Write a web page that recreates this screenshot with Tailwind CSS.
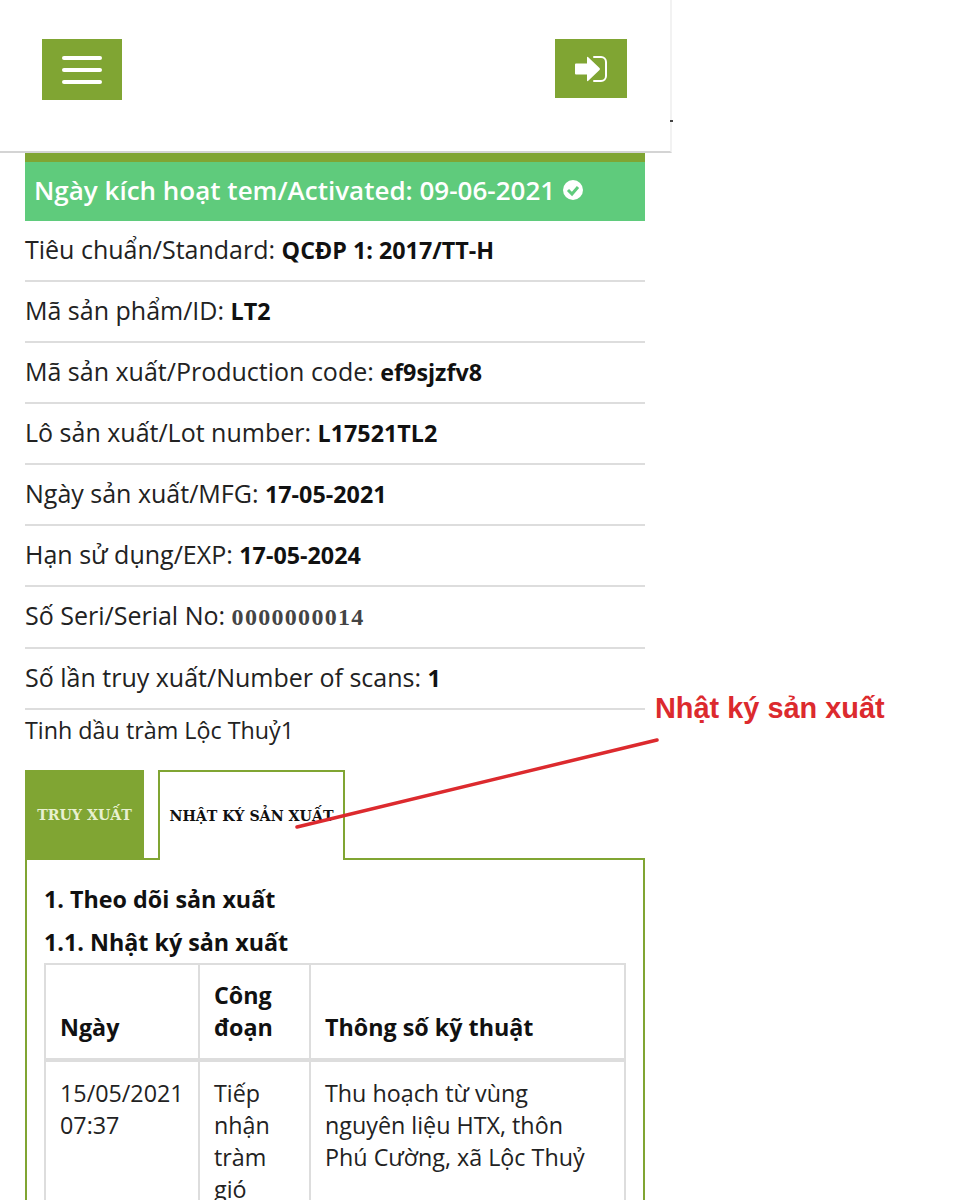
<!DOCTYPE html>
<html><head><script src="https://cdn.jsdelivr.net/npm/@tailwindcss/browser@4"></script></head>
<body class="bg-white">
<div class="relative w-[975px] h-[1200px] overflow-hidden font-['Open_Sans','Noto_Sans',sans-serif] text-[#222]">
<header class="h-[153px] w-[672px] border-b-2 border-[#d4d4d4] border-r-2 border-r-[#f2f2f2] flex justify-between pl-[42px] pr-[43px] pt-[39px]">
<div class="w-[80px] h-[61px] bg-[#80a533] flex flex-col items-center justify-center gap-[8px]">
<span class="block w-[40px] h-[4px] rounded-full bg-white"></span><span class="block w-[40px] h-[4px] rounded-full bg-white"></span><span class="block w-[40px] h-[4px] rounded-full bg-white"></span>
</div>
<div class="w-[72px] h-[59px] bg-[#80a533] flex items-center justify-center">
<svg width="32" height="26" viewBox="0 0 32 26" fill="white"><path d="M1 7.5h11V1.5q0-1 1-.5l11.500 11q1 1 0 2L13 25q-1 .5-1-.5V18.500H1q-1 0-1-1V8.500q0-1 1-1z"/><path d="M19 1h7a5 5 0 0 1 5 5v14a5 5 0 0 1-5 5h-7" fill="none" stroke="white" stroke-width="2" stroke-linecap="round"/></svg>
</div>
</header>
<main class="w-[620px] ml-[25px]">
<div class="h-[9px] bg-[#80a533]"></div>
<div class="h-[59px] bg-[#5fcb7c] text-white font-semibold text-[26px] flex items-center pl-[9px] pb-[3px] gap-[8px]">Ngày kích hoạt tem/Activated: 09-06-2021
<svg width="20" height="20" viewBox="0 0 20 20"><circle cx="10" cy="10" r="10" fill="white"/><path d="M5 10l4 4 6-7" stroke="#5fcb7c" stroke-width="3" fill="none"/></svg></div>
<div class="h-[61px] pb-[2px] border-b-2 border-[#ddd] flex items-center text-[25px]"><span>Tiêu chuẩn/Standard: <b class="text-[23.300px] text-[#111]">QCĐP 1: 2017/TT-H</b></span></div>
<div class="h-[61px] pb-[2px] border-b-2 border-[#ddd] flex items-center text-[25px]"><span>Mã sản phẩm/ID: <b class="text-[23.300px] text-[#111]">LT2</b></span></div>
<div class="h-[61px] pb-[2px] border-b-2 border-[#ddd] flex items-center text-[25px]"><span>Mã sản xuất/Production code: <b class="text-[23.300px] text-[#111]">ef9sjzfv8</b></span></div>
<div class="h-[61px] pb-[2px] border-b-2 border-[#ddd] flex items-center text-[25px]"><span>Lô sản xuất/Lot number: <b class="text-[23.300px] text-[#111]">L17521TL2</b></span></div>
<div class="h-[61px] pb-[2px] border-b-2 border-[#ddd] flex items-center text-[25px]"><span>Ngày sản xuất/MFG: <b class="text-[23.300px] text-[#111]">17-05-2021</b></span></div>
<div class="h-[61px] pb-[2px] border-b-2 border-[#ddd] flex items-center text-[25px]"><span>Hạn sử dụng/EXP: <b class="text-[23.300px] text-[#111]">17-05-2024</b></span></div>
<div class="h-[62px] pb-[3px] border-b-2 border-[#ddd] flex items-center text-[25px]"><span>Số Seri/Serial No: <b class="font-['Liberation_Serif'] text-[#444] text-[24px] tracking-[1.300px]">0000000014</b></span></div>
<div class="h-[61px] pb-[2px] border-b-2 border-[#ddd] flex items-center text-[25px]"><span>Số lần truy xuất/Number of scans: <b class="text-[23.300px] text-[#111]">1</b></span></div>
<div class="h-[42px] pb-[2px] flex items-center text-[23.300px]">Tinh dầu tràm Lộc Thuỷ1</div>
<div class="flex mt-[18px] gap-[14px] font-['DejaVu_Serif'] font-bold text-[14.200px] relative">
<div class="w-[119px] h-[90px] bg-[#80a533] text-[#e8f0d0] flex items-center justify-center pt-[2px]">TRUY XUẤT</div>
<div class="w-[187px] h-[90px] bg-white border-2 border-[#80a533] border-b-0 text-[#111] flex items-center justify-center pt-[2px]">NHẬT KÝ SẢN XUẤT</div>
</div>
<section class="border-2 border-[#80a533] -mt-[2px] px-[17px] pt-[22px] h-[400px] -z-10 relative text-[23.300px]">
<h3 class="font-bold text-[#111] leading-[34px]">1. Theo dõi sản xuất</h3>
<h4 class="font-bold text-[#111] leading-[34px] mt-[9px]">1.1. Nhật ký sản xuất</h4>
<div class="border-2 border-[#ddd] grid grid-cols-[154px_111px_1fr] mt-[4px] leading-[32px]">
<div class="font-bold text-[#111] border-r-2 border-b-4 border-[#ddd] px-[14px] pt-[14px] pb-[15px] flex items-end">Ngày</div>
<div class="font-bold text-[#111] border-r-2 border-b-4 border-[#ddd] px-[14px] pt-[14px] pb-[15px]">Công đoạn</div>
<div class="font-bold text-[#111] border-b-4 border-[#ddd] px-[14px] pt-[14px] pb-[15px] flex items-end">Thông số kỹ thuật</div>
<div class="border-r-2 border-[#ddd] px-[14px] pt-[15px]">15/05/2021 07:37</div>
<div class="border-r-2 border-[#ddd] px-[14px] pt-[15px]">Tiếp nhận tràm gió</div>
<div class="px-[14px] pt-[15px]">Thu hoạch từ vùng nguyên liệu HTX, thôn Phú Cường, xã Lộc Thuỷ</div>
</div>
</section>
</main>
<span class="absolute left-[670px] top-[120px] w-[3px] h-[2px] bg-[#444]"></span>
<div class="absolute left-[655px] top-[687px] font-['Liberation_Sans'] font-bold text-[28.900px] text-[#dc2a2e]">Nhật ký sản xuất</div>
<svg class="absolute left-0 top-0" width="975" height="1200"><line x1="297" y1="827" x2="657" y2="740" stroke="#dc2a2e" stroke-width="3.500" stroke-linecap="round"/></svg>
</div>
</body></html>
